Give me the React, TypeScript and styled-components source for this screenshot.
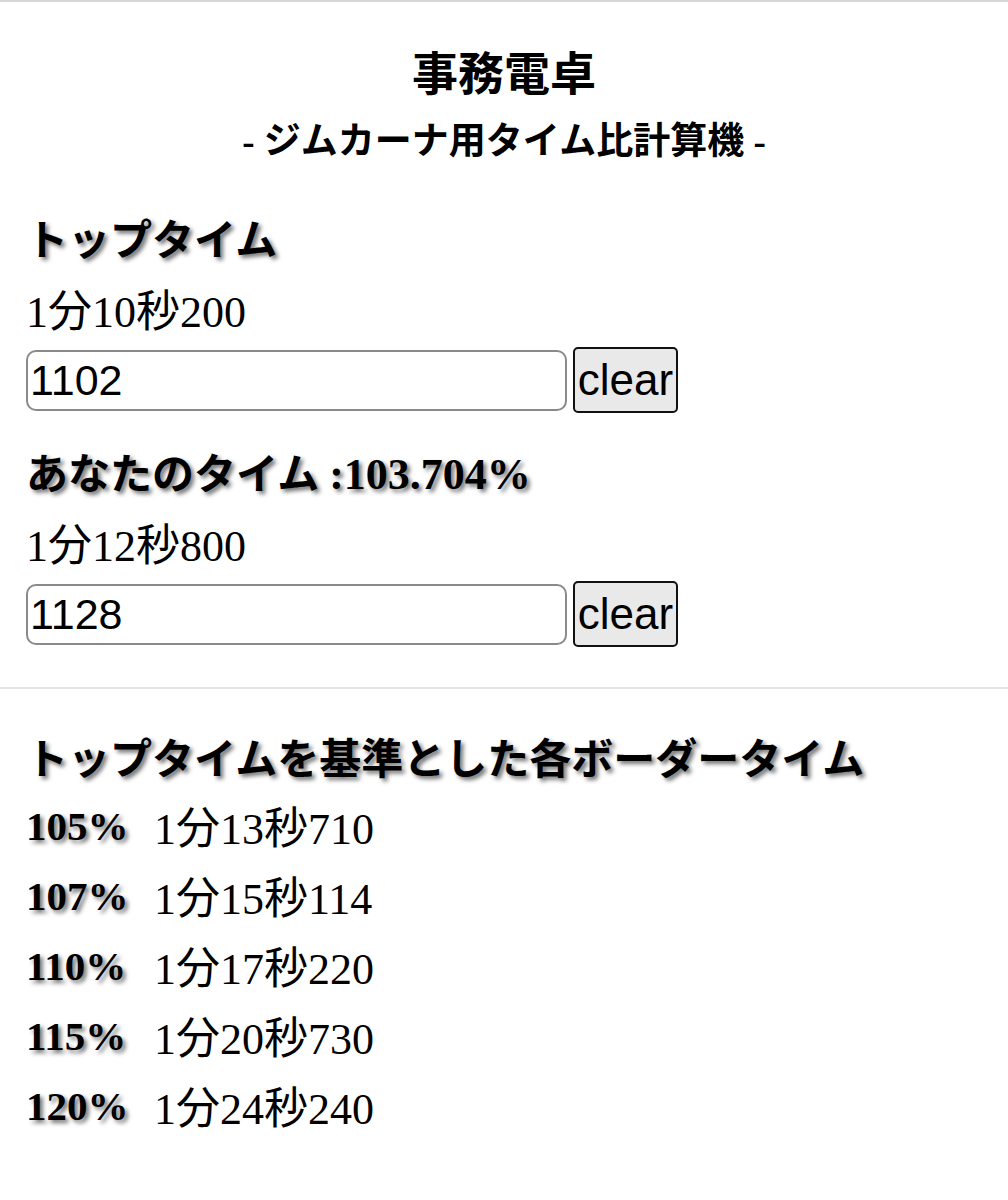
import React, { useState } from 'react';
import styled, { createGlobalStyle } from 'styled-components';

const GlobalStyle = createGlobalStyle`
  html, body {
    margin: 0;
    padding: 0;
    background: #fff;
    color: #000;
  }
  body {
    font-family: "Liberation Serif", "Noto Sans CJK JP", serif;
  }
`;

const Page = styled.div`
  border-top: 2px solid #d6d6d6;
  padding-top: 45px;
  padding-bottom: 60px;
`;

const Header = styled.header`
  text-align: center;
`;

const Title = styled.h1`
  margin: 0;
  font-size: 46px;
  line-height: 56px;
  font-weight: bold;
`;

const Subtitle = styled.h2`
  margin: 17px 0 0;
  font-size: 37px;
  line-height: 44px;
  font-weight: bold;
`;

const Section = styled.section`
  padding: 0 26px;
`;

const Heading = styled.h3<{ $gap: number }>`
  margin: ${p => p.$gap}px 0 0;
  font-size: 42px;
  line-height: 50px;
  font-weight: bold;
  text-shadow: 3px 3px 4px rgba(0, 0, 0, 0.55);
  white-space: nowrap;
`;

const Ratio = styled.span`
  margin-left: 10px;
  font-size: 44px;
`;

const TimeText = styled.div`
  margin-top: 22px;
  font-size: 44px;
  line-height: 50px;
`;

const InputRow = styled.div`
  display: flex;
  align-items: center;
  gap: 6px;
  margin-top: 9px;
`;

const TimeInput = styled.input`
  box-sizing: border-box;
  width: 541px;
  height: 61px;
  padding: 0 2px;
  border: 2px solid #8a8a8a;
  border-radius: 10px;
  font-family: "Liberation Sans", Arial, sans-serif;
  font-size: 43px;
  color: #000;
  background: #fff;
  outline: none;
`;

const ClearButton = styled.button`
  box-sizing: border-box;
  width: 105px;
  height: 66px;
  padding: 0 1px;
  background: #e9e9e9;
  border: 2px solid #111;
  border-radius: 5px;
  font-family: "Liberation Sans", Arial, sans-serif;
  font-size: 44px;
  color: #000;
  cursor: pointer;
`;

const Divider = styled.hr`
  margin: 40px 0 0;
  border: none;
  height: 2px;
  background: #e4e4e4;
`;

const BorderList = styled.div`
  margin-top: 10px;
  display: grid;
  grid-template-columns: 128px auto;
  justify-content: start;
  align-items: start;
`;

const Rate = styled.div`
  font-size: 41px;
  line-height: 62px;
  font-weight: bold;
  text-shadow: 3px 3px 4px rgba(0, 0, 0, 0.55);
`;

const BorderTime = styled.div`
  font-size: 44px;
  line-height: 70px;
`;

const parseTime = (v: string) => {
  const digits = v.replace(/\D/g, '');
  if (!digits) return 0;
  const d = Number(digits.slice(-1));
  const s = Number(digits.slice(-3, -1) || 0);
  const m = Number(digits.slice(0, -3) || 0);
  return m * 60000 + s * 1000 + d * 100;
};

const formatTime = (ms: number) => {
  const t = Math.round(ms);
  const m = Math.floor(t / 60000);
  const s = Math.floor((t % 60000) / 1000);
  const r = t % 1000;
  return `${m}分${s}秒${String(r).padStart(3, '0')}`;
};

const RATES = [105, 107, 110, 115, 120];

const App: React.FC = () => {
  const [top, setTop] = useState('1102');
  const [mine, setMine] = useState('1128');

  const topMs = parseTime(top);
  const mineMs = parseTime(mine);
  const ratio = topMs ? ((mineMs / topMs) * 100).toFixed(3) : '0.000';

  return (
    <Page>
      <GlobalStyle />
      <Header>
        <Title>事務電卓</Title>
        <Subtitle>- ジムカーナ用タイム比計算機 -</Subtitle>
      </Header>

      <Section>
        <Heading $gap={52}>トップタイム</Heading>
        <TimeText>{formatTime(topMs)}</TimeText>
        <InputRow>
          <TimeInput type="text" inputMode="numeric" value={top} onChange={e => setTop(e.target.value)} />
          <ClearButton onClick={() => setTop('')}>clear</ClearButton>
        </InputRow>

        <Heading $gap={37}>
          あなたのタイム<Ratio>:{ratio}%</Ratio>
        </Heading>
        <TimeText>{formatTime(mineMs)}</TimeText>
        <InputRow>
          <TimeInput type="text" inputMode="numeric" value={mine} onChange={e => setMine(e.target.value)} />
          <ClearButton onClick={() => setMine('')}>clear</ClearButton>
        </InputRow>
      </Section>

      <Divider />

      <Section>
        <Heading $gap={46}>トップタイムを基準とした各ボーダータイム</Heading>
        <BorderList>
          {RATES.map(rate => (
            <React.Fragment key={rate}>
              <Rate>{rate}%</Rate>
              <BorderTime>{formatTime((topMs * rate) / 100)}</BorderTime>
            </React.Fragment>
          ))}
        </BorderList>
      </Section>
    </Page>
  );
};

export default App;
